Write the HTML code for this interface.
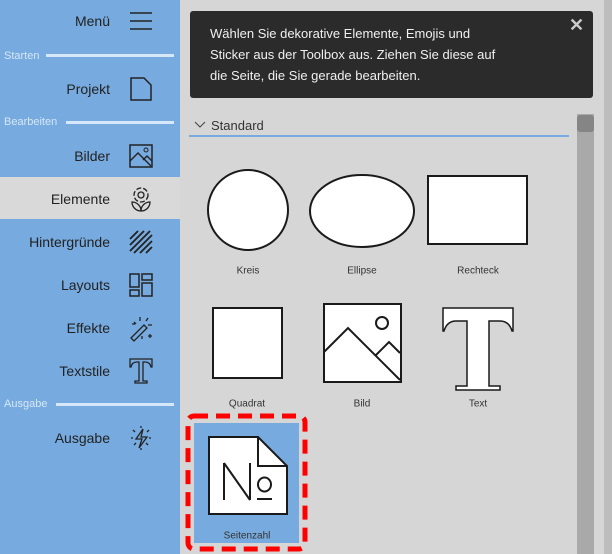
<!DOCTYPE html><html><head><meta charset="utf-8"><style>
*{margin:0;padding:0;box-sizing:border-box}
body{width:612px;height:554px;overflow:hidden;background:#d6d6d6;font-family:"Liberation Sans",sans-serif;position:relative}
.sb{position:absolute;left:0;top:0;width:180px;height:554px;background:#77aade}
.it{position:absolute;right:502px;font-size:14px;color:#222;transform:translateY(-50%);white-space:nowrap}
.sec{position:absolute;left:4px;font-size:11px;color:#d5e7f8;transform:translateY(-50%)}
.ln{position:absolute;right:438px;height:3px;background:#d5e7f8}
.ic{position:absolute;left:128px}
.lab{position:absolute;font-size:10px;color:#333;transform:translate(-50%,-50%)}
</style></head><body>
<div class="sb"></div>
<div style="position:absolute;left:0;top:177px;width:180px;height:42px;background:#d9d9d9"></div>
<div class="it" style="top:21px">Menü</div>
<svg class="ic" style="top:10px" width="26" height="22"><path d="M2 3h22M2 11h22M2 19h22" stroke="#222" stroke-width="1.6"/></svg>
<div class="sec" style="top:56px">Starten</div><div class="ln" style="top:54px;left:46px"></div>
<div class="it" style="top:89px">Projekt</div>
<svg class="ic" style="top:76px" width="26" height="26"><path d="M3 2h13l7 7v15H3z" fill="none" stroke="#222" stroke-width="1.5"/></svg>
<div class="sec" style="top:122px">Bearbeiten</div><div class="ln" style="top:121px;left:66px"></div>
<div class="it" style="top:156px">Bilder</div>
<svg class="ic" style="top:143px" width="26" height="26"><rect x="2" y="2" width="22" height="22" fill="none" stroke="#222" stroke-width="1.5"/><path d="M2 18l8-8 13 13M15 17l4-4 5 5" fill="none" stroke="#222" stroke-width="1.4"/><circle cx="18" cy="7" r="2" fill="none" stroke="#222"/></svg>
<div class="it" style="top:199px">Elemente</div>
<svg class="ic" style="top:186px" width="26" height="26"><circle cx="13" cy="9" r="3" fill="none" stroke="#222" stroke-width="1.3"/><circle cx="13" cy="9" r="7" fill="none" stroke="#222" stroke-width="1.3" stroke-dasharray="5 2"/><path d="M4 16c4 0 9 3 9 9c0-6 5-9 9-9c0 5-4 9-9 9c-5 0-9-4-9-9z" fill="none" stroke="#222" stroke-width="1.3"/></svg>
<div class="it" style="top:242px">Hintergründe</div>
<svg class="ic" style="top:229px" width="26" height="26"><path d="M2 10l8-8M2 16l14-14M2 22l20-20M6 24l18-18M12 24l12-12M18 24l6-6" stroke="#222" stroke-width="1.8"/></svg>
<div class="it" style="top:285px">Layouts</div>
<svg class="ic" style="top:272px" width="26" height="26"><g fill="none" stroke="#222" stroke-width="1.5"><rect x="2" y="2" width="9" height="13"/><rect x="2" y="18" width="9" height="6"/><rect x="14" y="2" width="10" height="6"/><rect x="14" y="11" width="10" height="13"/></g></svg>
<div class="it" style="top:328px">Effekte</div>
<svg class="ic" style="top:314px" width="28" height="28"><path d="M3 24l13-13 3 3-13 13z M12 3v4M20 4l-2 3M24 11h-4M6 8l2 2M4 10h3M22 20v4M20 22h4M14 22v3" fill="none" stroke="#222" stroke-width="1.3"/></svg>
<div class="it" style="top:371px">Textstile</div>
<svg class="ic" style="top:357px" width="26" height="28"><path d="M2 2h22v8h-1q-1-5-6-5h-2v19h4v2H7v-2h4V5H9q-5 0-6 5H2z" fill="none" stroke="#222" stroke-width="1.3"/></svg>
<div class="sec" style="top:404px">Ausgabe</div><div class="ln" style="top:403px;left:56px"></div>
<div class="it" style="top:438px">Ausgabe</div>
<svg class="ic" style="top:425px" width="26" height="26"><path d="M15 4l-7 10h6l-3 9 8-11h-6z M13 1v2M5 5l2 2M21 5l-2 2M3 13h2M21 13h2M6 20l2-2M20 20l-2-2M13 25v-2" fill="none" stroke="#222" stroke-width="1.3"/></svg>

<div style="position:absolute;left:190px;top:11px;width:403px;height:87px;background:#2b2b2b;border-radius:3px;color:#f0f0f0;font-size:13px;line-height:21px;padding:12px 0 0 20px">Wählen Sie dekorative Elemente, Emojis und<br>Sticker aus der Toolbox aus. Ziehen Sie diese auf<br>die Seite, die Sie gerade bearbeiten.</div>
<div style="position:absolute;left:569px;top:15px;color:#ccc;font-size:18px;font-weight:bold">✕</div>
<svg style="position:absolute;left:194px;top:121px" width="12" height="8"><path d="M1 1l5 5 5-5" fill="none" stroke="#444"/></svg>
<div style="position:absolute;left:211px;top:118px;font-size:13px;color:#333">Standard</div>
<div style="position:absolute;left:189px;top:135px;width:380px;height:2px;background:#77aade"></div>
<div style="position:absolute;left:577px;top:114px;width:17px;height:440px;background:#a9a9a9"></div>
<div style="position:absolute;left:577px;top:115px;width:17px;height:17px;background:#858585;border-radius:3px"></div>
<div style="position:absolute;left:604px;top:0;width:8px;height:554px;background:#bdbdbd"></div>

<svg style="position:absolute;left:0;top:0" width="612" height="554">
<g fill="#fff" stroke="#1a1a1a" stroke-width="2">
<circle cx="248" cy="210" r="40"/>
<ellipse cx="362" cy="211" rx="52" ry="36"/>
<rect x="428" y="176" width="99" height="68"/>
<rect x="213" y="308" width="69" height="70"/>
<rect x="324" y="304" width="77" height="78"/>
</g>
<g fill="none" stroke="#1a1a1a" stroke-width="2">
<path d="M324 352l24-24 52 52M376 355l13-13 11 11"/><circle cx="382" cy="323" r="6"/>
</g>
<path d="M443 308h70v23h-1q-3-10-12-10h-11v65h11v4h-44v-4h11v-65h-11q-9 0-12 10h-1z" fill="#fff" stroke="#1a1a1a" stroke-width="1.5"/>
<rect x="194" y="423" width="105" height="120" fill="#77aade"/>
<path d="M209 437h49l29 29v48h-78z" fill="#fff" stroke="#1a1a1a" stroke-width="2"/>
<path d="M258 437v29h29" fill="none" stroke="#1a1a1a" stroke-width="2"/>
<line x1="224" y1="463" x2="224" y2="500" stroke="#1a1a1a" stroke-width="2"/>
<line x1="224" y1="463" x2="250" y2="500" stroke="#1a1a1a" stroke-width="2"/>
<line x1="250" y1="463" x2="250" y2="500" stroke="#1a1a1a" stroke-width="2"/>
<line x1="257" y1="499" x2="272" y2="499" stroke="#1a1a1a" stroke-width="2"/>
<ellipse cx="264.5" cy="484.5" rx="6.5" ry="7" fill="none" stroke="#1a1a1a" stroke-width="2"/>
<rect x="188" y="416" width="117" height="133" rx="6" fill="none" stroke="#f00" stroke-width="5" stroke-dasharray="14 8"/>
</svg>
<div class="lab" style="left:248px;top:271px">Kreis</div>
<div class="lab" style="left:362px;top:271px">Ellipse</div>
<div class="lab" style="left:478px;top:271px">Rechteck</div>
<div class="lab" style="left:247px;top:404px">Quadrat</div>
<div class="lab" style="left:362px;top:404px">Bild</div>
<div class="lab" style="left:478px;top:404px">Text</div>
<div class="lab" style="left:247px;top:536px">Seitenzahl</div>
</body></html>
